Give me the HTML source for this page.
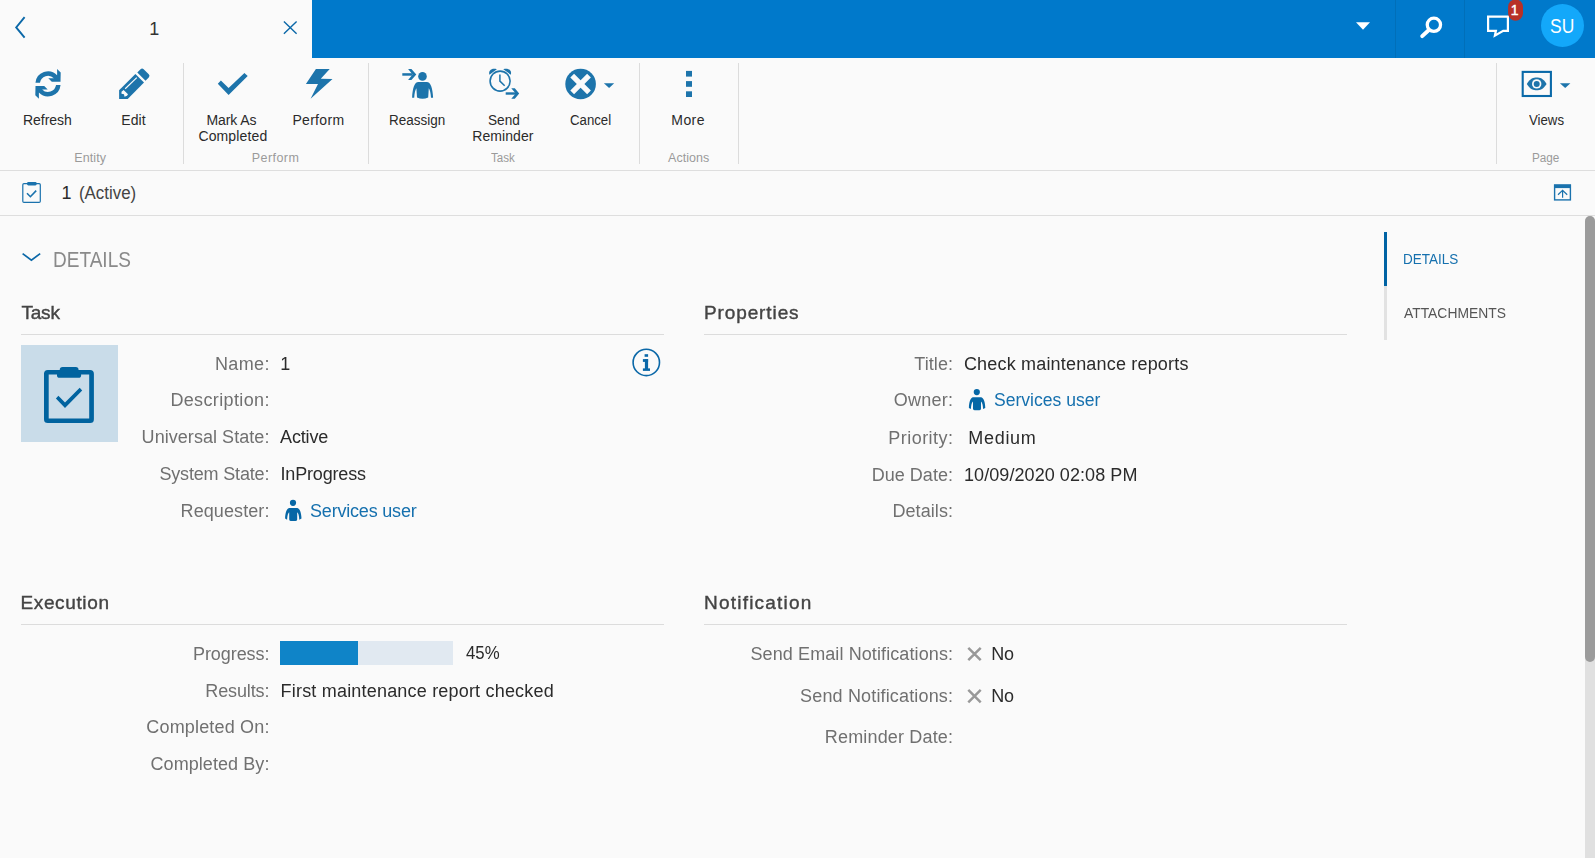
<!DOCTYPE html>
<html lang="en"><head><meta charset="utf-8"><title>1 (Active)</title>
<style>
html,body{margin:0;padding:0;}
body{width:1595px;height:858px;overflow:hidden;background:#fafafa;font-family:"Liberation Sans",sans-serif;position:relative;}
.t{position:absolute;white-space:nowrap;line-height:1;transform-origin:0 0;}
.a{position:absolute;}
svg{position:absolute;overflow:visible;}
#ctexts{position:absolute;left:0;top:216px;width:1585px;height:642px;will-change:transform;}
#ctexts .t{margin-top:-216px;}

</style></head>
<body>
<div class="a" style="left:312px;top:0;width:1283px;height:58px;background:#0079cb"></div>
<div class="a" style="left:1395px;top:0;width:1px;height:58px;background:#006fb9"></div>
<div class="a" style="left:1464px;top:0;width:1px;height:58px;background:#006fb9"></div>
<div class="a" style="left:1541px;top:4px;width:43px;height:43px;border-radius:50%;background:#13a8fa"></div>
<!-- ribbon separators -->
<div class="a" style="left:183px;top:63px;width:1px;height:101px;background:#dcdcdc"></div>
<div class="a" style="left:368px;top:63px;width:1px;height:101px;background:#dcdcdc"></div>
<div class="a" style="left:639px;top:63px;width:1px;height:101px;background:#dcdcdc"></div>
<div class="a" style="left:738px;top:63px;width:1px;height:101px;background:#dcdcdc"></div>
<div class="a" style="left:1496px;top:63px;width:1px;height:101px;background:#dcdcdc"></div>
<div class="a" style="left:0;top:170px;width:1595px;height:1px;background:#dedede"></div>
<div class="a" style="left:0;top:215px;width:1595px;height:1px;background:#dedede"></div>
<!-- group lines -->
<div class="a" style="left:21px;top:334px;width:643px;height:1px;background:#dcdcdc"></div>
<div class="a" style="left:704px;top:334px;width:643px;height:1px;background:#dcdcdc"></div>
<div class="a" style="left:21px;top:624px;width:643px;height:1px;background:#dcdcdc"></div>
<div class="a" style="left:704px;top:624px;width:643px;height:1px;background:#dcdcdc"></div>
<!-- image box -->
<div class="a" style="left:21px;top:345px;width:97px;height:97px;background:#c9dce9"></div>
<!-- progress -->
<div class="a" style="left:280px;top:641px;width:173px;height:24px;background:#e1e9f1"></div>
<div class="a" style="left:280px;top:641px;width:78px;height:24px;background:#0f84c8"></div>
<!-- right nav -->
<div class="a" style="left:1384px;top:232px;width:3px;height:54px;background:#0063a4"></div>
<div class="a" style="left:1384px;top:286px;width:3px;height:54px;background:#e2e2e2"></div>
<!-- scrollbar -->
<div class="a" style="left:1585px;top:216px;width:10px;height:642px;background:#e0e0e0;border-radius:5px 5px 0 0"></div>
<div class="a" style="left:1585px;top:216px;width:10px;height:446px;background:#9b9b9b;border-radius:5px"></div>
<svg width="1595" height="858" viewBox="0 0 1595 858" style="left:0;top:0">
<!-- tab chevrons -->
<polyline points="24.6,17.2 16.2,27.4 24.6,37.6" fill="none" stroke="#0b68a8" stroke-width="1.9"/>
<path d="M283.9,21.4 L296.6,33.7 M296.6,21.4 L283.9,33.7" fill="none" stroke="#0b68a8" stroke-width="1.4"/>
<!-- header icons -->
<polygon points="1356,22.2 1370,22.2 1363,29.8" fill="#fff"/>
<circle cx="1433.9" cy="24.8" r="6.65" fill="none" stroke="#fff" stroke-width="3.3"/>
<line x1="1428.6" y1="30.2" x2="1422.2" y2="36.1" stroke="#fff" stroke-width="3.9" stroke-linecap="round"/>
<path d="M1488.1,16.7 H1507.9 V30.8 H1503.2 L1494.9,35.6 L1495.9,30.8 H1488.1 Z" fill="none" stroke="#fff" stroke-width="2.2" stroke-linejoin="miter"/>
<rect x="1508.1" y="-0.6" width="14.9" height="21.3" rx="7.45" fill="#b83027"/>
<!-- ribbon icons -->
<g fill="#1d74ab">
<g transform="translate(28,62)">
<path d="M7.46,20.7 A12.6,12.6 0 0 1 29.1,13.2 L29.1,7 L32.7,10.5 L32.5,19.8 L23.8,19.8 L20.3,16.3 L25.85,16.3 A8.1,8.1 0 0 0 11.99,20.7 Z"/>
<path transform="rotate(180 20 21.9)" d="M7.46,20.7 A12.6,12.6 0 0 1 29.1,13.2 L29.1,7 L32.7,10.5 L32.5,19.8 L23.8,19.8 L20.3,16.3 L25.85,16.3 A8.1,8.1 0 0 0 11.99,20.7 Z"/>
</g>
<g transform="translate(114,62)">
<polygon points="5.1,28.2 21.4,12.1 30,20.5 13.7,36.9 5.1,36.9"/>
<g transform="translate(27.4,14.6) rotate(-45)"><path d="M0,-5.8 H4.6 A2.2,2.2 0 0 1 6.8,-3.6 V3.6 A2.2,2.2 0 0 1 4.6,5.8 H0 Z"/></g>
<polygon points="9.6,28 14,32.2 13,33.8 10.5,34.7 10,32.2 7.5,31.7 7.5,29.8" fill="#fafafa"/>
<line x1="11.2" y1="26.8" x2="22.8" y2="15.6" stroke="#fafafa" stroke-width="1.2"/>
</g>
<polygon points="217.8,83.7 220.9,80.6 228.6,88.1 244.4,73 247.7,76 228.6,94.9"/>
<polygon points="315.9,69 329.7,69 320.8,78.8 332.5,79 310.6,98.8 318,83.9 305.9,83.9"/>
<!-- reassign -->
<g transform="translate(396,62)">
<rect x="6.3" y="11.2" width="10.2" height="2.5"/>
<polygon points="12.1,7 15.4,7 20.3,12.45 15.4,17.9 12.1,17.9 16.6,12.45"/>
<circle cx="26.5" cy="14.4" r="4.3"/>
<path d="M22.4,20 C18.5,20 16.6,26 16.1,35.7 L18.2,35.7 C18.5,31 19.3,28 20.4,26.3 L21,35.5 Q26.6,38 32.2,35.5 L32.8,26.3 C33.9,28 34.7,31 35,35.7 L37.1,35.7 C36.6,26 34.7,20 30.8,20 Z"/>
</g>
<!-- send reminder -->
<g transform="translate(484,62)">
<circle cx="16.1" cy="19.1" r="10" fill="none" stroke="#1d74ab" stroke-width="1.6"/>
<polyline points="15.9,12.6 15.9,19.1 20.7,23.8" fill="none" stroke="#1d74ab" stroke-width="1.5"/>
<path d="M5.4,12.7 C4,8.4 8,5.6 12.9,7.2 Z"/>
<path d="M26.8,12.7 C28.2,8.4 24.2,5.6 19.3,7.2 Z"/>
<rect x="21.7" y="30.3" width="10.5" height="2.4"/>
<polygon points="27.3,26.3 30.8,26.3 35.2,31.5 30.8,36.8 27.3,36.8 31.7,31.5"/>
</g>
<!-- cancel -->
<circle cx="580.6" cy="84" r="15.3"/>
<g transform="translate(580.6,84)" fill="#fafafa">
<rect x="-11.9" y="-2.65" width="23.8" height="5.3" transform="rotate(45)"/>
<rect x="-11.9" y="-2.65" width="23.8" height="5.3" transform="rotate(-45)"/>
</g>
<polygon points="603.9,83.2 614.2,83.2 609.1,88.1"/>
<!-- more -->
<rect x="686" y="70.9" width="6" height="5.7"/>
<rect x="686" y="81.1" width="6" height="5.7"/>
<rect x="686" y="91.3" width="6" height="5.7"/>
<!-- views -->
<polygon points="1559.9,83.2 1570.4,83.2 1565.2,88.1"/>
</g>
<rect x="1522.7" y="71.9" width="28.2" height="24.1" fill="none" stroke="#0a69a8" stroke-width="2.1"/>
<path d="M1526.8,83.9 C1530.2,78.4 1533.5,77.6 1536.7,77.6 C1539.9,77.6 1543.2,78.4 1546.6,83.9 C1543.2,89.4 1539.9,90.2 1536.7,90.2 C1533.5,90.2 1530.2,89.4 1526.8,83.9 Z" fill="#1d74ab"/>
<circle cx="1536.7" cy="83.9" r="4.7" fill="#fafafa"/>
<circle cx="1536.7" cy="83.9" r="3" fill="#1d74ab"/>
<!-- title bar icons -->
<rect x="22.8" y="183.6" width="17.5" height="18.8" rx="1.2" fill="none" stroke="#1a72ad" stroke-width="1.2"/>
<rect x="27" y="182" width="9.7" height="3.5" rx="1.4" fill="#1a72ad"/>
<polyline points="27,193.3 30.4,196.7 36.2,190.6" fill="none" stroke="#1a72ad" stroke-width="1.6"/>
<rect x="1554.6" y="185.1" width="15.8" height="14.8" fill="none" stroke="#1a72ad" stroke-width="1.4"/>
<rect x="1554" y="184.5" width="17" height="3.6" fill="#1a72ad"/>
<path d="M1562.6,190.4 V197.7 M1558,194.7 L1562.6,190.3 L1567.2,194.7" fill="none" stroke="#1a72ad" stroke-width="1.2"/>
<!-- section chevron -->
<polyline points="22.6,253.6 31.4,260.1 40.2,253.6" fill="none" stroke="#0b68a8" stroke-width="1.7"/>
<!-- big clipboard -->
<g transform="translate(30,355)" fill="#00639f">
<rect x="16.35" y="17.25" width="45.2" height="48.5" rx="1.5" fill="none" stroke="#00639f" stroke-width="4.7"/>
<path d="M29.8,16 V14.6 Q29.8,11.9 32.5,11.9 H45.8 Q48.5,11.9 48.5,14.6 V16 Z"/>
<path d="M27,19 H51.1 V20.2 Q51.1,22.8 48.5,22.8 H29.6 Q27,22.8 27,20.2 Z"/>
<polygon points="25.9,43.4 28.4,40.8 35,47.6 49.7,32.8 52.2,35.4 35,53.1"/>
</g>
<!-- info -->
<circle cx="646.3" cy="362.4" r="13.2" fill="none" stroke="#0b68a8" stroke-width="1.6"/>
<g fill="#0b68a8">
<rect x="644.6" y="354.2" width="3.5" height="2.6"/>
<rect x="642.9" y="359.1" width="5.2" height="2.8"/>
<rect x="644.9" y="359.1" width="3.2" height="10"/>
<rect x="642.9" y="368.4" width="7.1" height="2.5"/>
</g>
<!-- small persons -->
<g fill="#0667a6">
<g transform="translate(278,494)">
<circle cx="15" cy="8.8" r="3.1"/>
<path d="M11,14 C8.5,14.8 7.3,19 7.1,24.6 L9.1,25.7 C9.3,21.5 10,19.5 11.2,18.3 L11.2,25.5 Q11.4,27 13,27 H17.4 Q19,27 19.2,25.5 L19.2,18.3 C20.4,19.5 21.1,21.5 21.3,25.7 L23.5,24.6 C23.3,19 22.1,14.8 19.4,14 Z"/>
</g>
<g transform="translate(961.8,383.3)">
<circle cx="15" cy="8.8" r="3.1"/>
<path d="M11,14 C8.5,14.8 7.3,19 7.1,24.6 L9.1,25.7 C9.3,21.5 10,19.5 11.2,18.3 L11.2,25.5 Q11.4,27 13,27 H17.4 Q19,27 19.2,25.5 L19.2,18.3 C20.4,19.5 21.1,21.5 21.3,25.7 L23.5,24.6 C23.3,19 22.1,14.8 19.4,14 Z"/>
</g>
</g>
<!-- grey X -->
<path d="M968.3,647.8 L980.7,660.2 M980.7,647.8 L968.3,660.2 M968.3,689.9 L980.7,702.3 M980.7,689.9 L968.3,702.3" fill="none" stroke="#999" stroke-width="2.5"/>
</svg>

<div id="texts">
<span class="t" style="left:149.30px;top:20px;font-size:18px;color:#333;">1</span>
<span class="t" style="left:1510.70px;top:3px;font-size:14px;color:#fff;-webkit-text-stroke:0.4px #fff;">1</span>
<span class="t" style="left:1550.45px;top:17px;font-size:19.5px;color:#fff;transform:scaleX(0.8959);">SU</span>
<span class="t" style="left:23.00px;top:113px;font-size:14px;color:#2a2a2a;letter-spacing:-0.039px;">Refresh</span>
<span class="t" style="left:121.25px;top:113px;font-size:14px;color:#2a2a2a;letter-spacing:0.089px;">Edit</span>
<span class="t" style="left:206.40px;top:113px;font-size:14px;color:#2a2a2a;letter-spacing:-0.056px;">Mark As</span>
<span class="t" style="left:198.40px;top:129px;font-size:14px;color:#2a2a2a;letter-spacing:0.135px;">Completed</span>
<span class="t" style="left:292.40px;top:113px;font-size:14px;color:#2a2a2a;letter-spacing:0.313px;">Perform</span>
<span class="t" style="left:388.79px;top:113px;font-size:14px;color:#2a2a2a;transform:scaleX(0.9633);">Reassign</span>
<span class="t" style="left:488.00px;top:113px;font-size:14px;color:#2a2a2a;transform:scaleX(0.9715);">Send</span>
<span class="t" style="left:472.25px;top:129px;font-size:14px;color:#2a2a2a;letter-spacing:0.068px;">Reminder</span>
<span class="t" style="left:569.50px;top:113px;font-size:14px;color:#2a2a2a;transform:scaleX(0.9432);">Cancel</span>
<span class="t" style="left:671.25px;top:113px;font-size:14px;color:#2a2a2a;letter-spacing:0.463px;">More</span>
<span class="t" style="left:1528.50px;top:113px;font-size:14px;color:#2a2a2a;transform:scaleX(0.9436);">Views</span>
<span class="t" style="left:74.25px;top:152px;font-size:12.5px;color:#9a9a9a;letter-spacing:0.098px;">Entity</span>
<span class="t" style="left:251.80px;top:152px;font-size:12.5px;color:#9a9a9a;letter-spacing:0.427px;">Perform</span>
<span class="t" style="left:491.25px;top:152px;font-size:12.5px;color:#9a9a9a;transform:scaleX(0.9262);">Task</span>
<span class="t" style="left:668.00px;top:152px;font-size:12.5px;color:#9a9a9a;letter-spacing:0.043px;">Actions</span>
<span class="t" style="left:1531.81px;top:152px;font-size:12.5px;color:#9a9a9a;transform:scaleX(0.9383);">Page</span>
<span class="t" style="left:61.50px;top:184px;font-size:18px;color:#2b2b2b;">1</span>
<span class="t" style="left:78.76px;top:184px;font-size:18px;color:#444;transform:scaleX(0.9371);">(Active)</span>
</div>
<div id="ctexts">
<span class="t" style="left:53.43px;top:249px;font-size:22px;color:#8a8a8a;transform:scaleX(0.8655);">DETAILS</span>
<span class="t" style="left:21.40px;top:303px;font-size:19px;color:#444444;letter-spacing:-0.189px;-webkit-text-stroke:0.4px #444444;">Task</span>
<span class="t" style="left:703.90px;top:303px;font-size:19px;color:#444444;letter-spacing:0.901px;-webkit-text-stroke:0.4px #444444;">Properties</span>
<span class="t" style="left:20.50px;top:593px;font-size:19px;color:#444444;letter-spacing:0.628px;-webkit-text-stroke:0.4px #444444;">Execution</span>
<span class="t" style="left:704.10px;top:593px;font-size:19px;color:#444444;letter-spacing:1.198px;-webkit-text-stroke:0.4px #444444;">Notification</span>
<span class="t" style="left:214.90px;top:355px;font-size:18px;color:#707070;letter-spacing:0.371px;">Name:</span>
<span class="t" style="left:170.40px;top:391px;font-size:18px;color:#707070;letter-spacing:0.360px;">Description:</span>
<span class="t" style="left:141.60px;top:428px;font-size:18px;color:#707070;letter-spacing:0.050px;">Universal State:</span>
<span class="t" style="left:159.40px;top:465px;font-size:18px;color:#707070;letter-spacing:-0.170px;">System State:</span>
<span class="t" style="left:180.60px;top:502px;font-size:18px;color:#707070;letter-spacing:0.084px;">Requester:</span>
<span class="t" style="left:193.00px;top:645px;font-size:18px;color:#707070;letter-spacing:-0.078px;">Progress:</span>
<span class="t" style="left:205.30px;top:682px;font-size:18px;color:#707070;letter-spacing:-0.132px;">Results:</span>
<span class="t" style="left:146.30px;top:718px;font-size:18px;color:#707070;letter-spacing:0.170px;">Completed On:</span>
<span class="t" style="left:150.50px;top:755px;font-size:18px;color:#707070;letter-spacing:0.071px;">Completed By:</span>
<span class="t" style="left:914.30px;top:355px;font-size:18px;color:#707070;letter-spacing:0.073px;">Title:</span>
<span class="t" style="left:893.70px;top:391px;font-size:18px;color:#707070;letter-spacing:0.257px;">Owner:</span>
<span class="t" style="left:888.30px;top:429px;font-size:18px;color:#707070;letter-spacing:0.462px;">Priority:</span>
<span class="t" style="left:871.70px;top:466px;font-size:18px;color:#707070;letter-spacing:0.032px;">Due Date:</span>
<span class="t" style="left:892.40px;top:502px;font-size:18px;color:#707070;letter-spacing:0.083px;">Details:</span>
<span class="t" style="left:750.50px;top:645px;font-size:18px;color:#707070;letter-spacing:0.100px;">Send Email Notifications:</span>
<span class="t" style="left:800.10px;top:687px;font-size:18px;color:#707070;letter-spacing:0.157px;">Send Notifications:</span>
<span class="t" style="left:824.80px;top:728px;font-size:18px;color:#707070;letter-spacing:0.165px;">Reminder Date:</span>
<span class="t" style="left:280.20px;top:355px;font-size:18px;color:#2b2b2b;">1</span>
<span class="t" style="left:280.10px;top:428px;font-size:18px;color:#2b2b2b;letter-spacing:-0.181px;">Active</span>
<span class="t" style="left:280.50px;top:465px;font-size:18px;color:#2b2b2b;letter-spacing:-0.171px;">InProgress</span>
<span class="t" style="left:310.00px;top:502px;font-size:18px;color:#1570ae;letter-spacing:-0.195px;">Services user</span>
<span class="t" style="left:466.20px;top:644px;font-size:18px;color:#2b2b2b;transform:scaleX(0.9328);">45%</span>
<span class="t" style="left:280.60px;top:682px;font-size:18px;color:#2b2b2b;letter-spacing:0.193px;">First maintenance report checked</span>
<span class="t" style="left:963.90px;top:355px;font-size:18px;color:#2b2b2b;letter-spacing:0.183px;">Check maintenance reports</span>
<span class="t" style="left:993.60px;top:391px;font-size:18px;color:#1570ae;transform:scaleX(0.9748);">Services user</span>
<span class="t" style="left:968.30px;top:429px;font-size:18px;color:#2b2b2b;letter-spacing:0.695px;">Medium</span>
<span class="t" style="left:964.00px;top:466px;font-size:18px;color:#2b2b2b;letter-spacing:0.070px;">10/09/2020 02:08 PM</span>
<span class="t" style="left:991.30px;top:645px;font-size:18px;color:#2b2b2b;letter-spacing:-0.199px;">No</span>
<span class="t" style="left:991.30px;top:687px;font-size:18px;color:#2b2b2b;letter-spacing:-0.199px;">No</span>
<span class="t" style="left:1403.40px;top:251px;font-size:15px;color:#1570ae;transform:scaleX(0.9006);">DETAILS</span>
<span class="t" style="left:1403.60px;top:305px;font-size:15px;color:#555;transform:scaleX(0.9241);">ATTACHMENTS</span>
</div>
</body></html>
